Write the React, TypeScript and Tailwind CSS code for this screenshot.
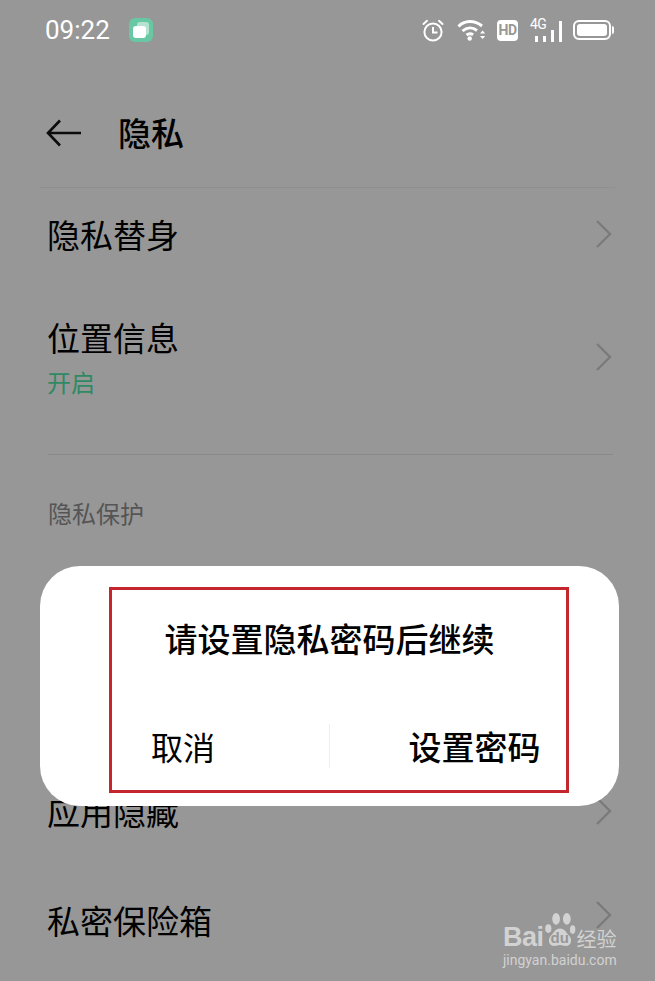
const cjk = "font-['Noto_Sans_CJK_SC','Noto_Sans',sans-serif]";

function Chevron() {
  return (
    <svg width="18" height="30" viewBox="0 0 18 30" fill="none" stroke="#7b7b7b" strokeWidth="2.4">
      <path d="M2 2l13 13L2 28" />
    </svg>
  );
}

function StatusIcons() {
  return (
    <div className="flex items-center">
      {/* alarm */}
      <svg width="22" height="23" viewBox="0 0 22 23" fill="none" stroke="#fff" strokeWidth="2">
        <circle cx="11" cy="13" r="8.6" />
        <path d="M11 8v5.5h4.5" />
        <path d="M1.5 5L5 1.8M20.5 5L17 1.8" strokeLinecap="round" />
      </svg>
      {/* wifi */}
      <svg className="ml-[13px]" width="29" height="22" viewBox="0 0 29 22" fill="none" stroke="#fff" strokeWidth="3">
        <path d="M1.5 7.5C7.500 1 17.500 1 25 7" />
        <path d="M5.500 12c4.500-4 10-4 14.500-.5" />
        <path d="M9.500 16c2.200-1.600 4.600-1.600 6.600-.2" />
        <circle cx="12.700" cy="19.500" r="2.200" fill="#fff" stroke="none" />
        <path d="M23 14.500l2.600-3 2.600 3zM23 17l2.600 3 2.600-3z" fill="#fff" stroke="none" />
      </svg>
      {/* hd */}
      <div className="ml-[11px] flex h-[21px] w-[21px] items-center justify-center rounded-[4px] bg-white text-[14px] leading-none font-bold tracking-[-0.5px] text-[#979797] font-['Roboto',sans-serif]">
        HD
      </div>
      {/* 4g + signal */}
      <div className="relative ml-[12px] h-[24px] w-[32px]">
        <span className="absolute top-[-2px] left-0 text-[14px] leading-[16px] tracking-[-0.5px] text-white font-['Roboto',sans-serif]">
          4G
        </span>
        <div className="absolute right-0 bottom-0 flex items-end gap-[5px]">
          <span className="h-[6px] w-[3px] bg-white" />
          <span className="h-[6px] w-[3px] bg-white" />
          <span className="h-[12px] w-[3px] bg-white" />
          <span className="h-[21px] w-[3px] bg-white" />
        </div>
      </div>
      {/* battery */}
      <div className="ml-[11px] flex items-center">
        <div className="h-[20px] w-[38px] rounded-[6px] border-2 border-white p-[2px]">
          <div className="h-full w-full rounded-[3px] bg-white" />
        </div>
        <div className="ml-[1px] h-[8px] w-[2px] rounded-r-sm bg-white" />
      </div>
    </div>
  );
}

function Watermark() {
  return (
    <div className="absolute top-[912px] left-[503px] w-[116px] text-[#d9d9d9] opacity-90">
      <div className="flex h-[37px] items-end">
        <span className="text-[27px] leading-[24px] font-bold tracking-[-0.5px] font-['Liberation_Sans',sans-serif]">Bai</span>
        <div className="relative h-[37px] w-[32px]">
          <svg className="absolute top-0 left-0" width="32" height="37" viewBox="0 0 32 38" fill="#d9d9d9">
            <ellipse cx="4" cy="17" rx="3.2" ry="4.500" />
            <ellipse cx="12" cy="7" rx="4" ry="6" />
            <ellipse cx="23" cy="7" rx="4" ry="6" />
            <ellipse cx="29" cy="18" rx="2.800" ry="4.500" />
            <path d="M16 17c5 0 6 4 9 7 4 4 3 11-3 11-2.500 0-4-1-6-1s-3.500 1-6 1c-6 0-7-7-3-11 3-3 4-7 9-7z" />
          </svg>
          <span className="absolute top-[18px] left-[7px] text-[15px] leading-[16px] font-bold text-[#979797] font-['Liberation_Sans',sans-serif]">du</span>
        </div>
        <span className={`${cjk} ml-[1px] text-[20px] leading-[20px] whitespace-nowrap`}>经验</span>
      </div>
      <div className="mt-[2px] text-[14px] leading-[18px] whitespace-nowrap font-['Roboto',sans-serif]">
        jingyan.baidu.com
      </div>
    </div>
  );
}

export default function App() {
  return (
    <div className={`${cjk} relative h-[981px] w-[655px] overflow-hidden bg-[#979797] text-black`}>
      {/* status bar */}
      <div className="flex h-[60px] items-center justify-between pr-[41px] pl-[45px]">
        <div className="flex items-center">
          <span className="text-[26px] leading-none text-white font-['Roboto',sans-serif]">09:22</span>
          <div className="relative ml-[19px] h-[24px] w-[24px] rounded-[6px] bg-[#69c8a4]">
            <div className="absolute top-[4px] left-[8px] h-[13px] w-[12px] rounded-[3px] bg-[#b4e4d1]" />
            <div className="absolute top-[8px] left-[4px] h-[12px] w-[13px] rounded-[3px] bg-white" />
          </div>
        </div>
        <StatusIcons />
      </div>

      {/* header */}
      <div className="mx-[40px] flex h-[128px] items-center border-b border-[#8f8f8f] pt-[18px]">
        <svg className="ml-[6px]" width="35" height="28" viewBox="0 0 35 28" fill="none" stroke="#0c0c0c" strokeWidth="2.6">
          <path d="M14 1.500L2 14l12 12.500M2 14h33" />
        </svg>
        <span className="ml-[37px] text-[33px] leading-none font-medium">隐私</span>
      </div>

      {/* list */}
      <div className="mx-[48px] w-[565px]">
        <div className="flex h-[93px] items-center justify-between">
          <span className="-ml-px text-[33px] leading-none">隐私替身</span>
          <div className="mb-[2px]">
            <Chevron />
          </div>
        </div>
        <div className="flex h-[174px] items-center justify-between border-b border-[#8a8a8a] pt-[36px] pb-[56px]">
          <div className="-ml-px">
            <div className="text-[33px] leading-[40px]">位置信息</div>
            <div className="mt-[8px] text-[24px] leading-[34px] text-[#2f8a63]">开启</div>
          </div>
          <div className="mb-[2px]">
            <Chevron />
          </div>
        </div>
        <div className="mt-[40px] text-[24px] leading-[36px] text-[#555555]">隐私保护</div>
        <div className="mt-[255px] flex h-[50px] items-center justify-between">
          <span className="-ml-px text-[33px] leading-none">应用隐藏</span>
          <div className="mb-[0px]">
            <Chevron />
          </div>
        </div>
        <div className="mt-[59px] flex h-[50px] items-center justify-between">
          <span className="-ml-px text-[33px] leading-none">私密保险箱</span>
          <div className="mb-[10px]">
            <Chevron />
          </div>
        </div>
      </div>

      {/* dialog */}
      <div className="absolute top-[566px] left-[40px] flex h-[240px] w-[579px] flex-col rounded-[40px] bg-white">
        <div className="pt-[49px] text-center text-[33px] leading-[46px] font-medium">请设置隐私密码后继续</div>
        <div className="mt-[63px] flex h-[44px] items-center">
          <div className="flex-1 text-center text-[32px] leading-none">
            <span className="mr-[3px]">取消</span>
          </div>
          <div className="h-[44px] w-px bg-[#eeeeee]" />
          <div className="flex-1 text-center text-[33px] leading-none font-medium">设置密码</div>
        </div>
      </div>

      {/* red annotation box */}
      <div className="absolute top-[587px] left-[109px] h-[206px] w-[460px] border-[3px] border-[#c4262e]" />

      <Watermark />
    </div>
  );
}
